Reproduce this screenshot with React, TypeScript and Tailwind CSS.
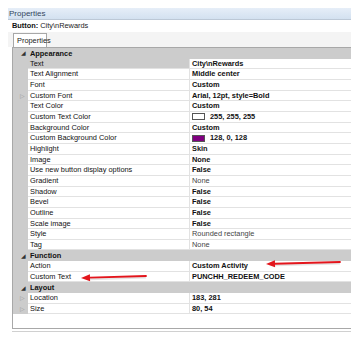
type Row = {
  label: string;
  value: string;
  bold?: boolean;
  expand?: boolean;
  selected?: boolean;
  swatch?: string;
};

type Section = { name: string; rows: Row[] };

const sections: Section[] = [
  {
    name: "Appearance",
    rows: [
      { label: "Text", value: "City\\nRewards", bold: true, selected: true },
      { label: "Text Alignment", value: "Middle center", bold: true },
      { label: "Font", value: "Custom", bold: true },
      { label: "Custom Font", value: "Arial, 12pt, style=Bold", bold: true, expand: true },
      { label: "Text Color", value: "Custom", bold: true },
      { label: "Custom Text Color", value: "255, 255, 255", bold: true, swatch: "#ffffff" },
      { label: "Background Color", value: "Custom", bold: true },
      { label: "Custom Background Color", value: "128, 0, 128", bold: true, swatch: "#800080" },
      { label: "Highlight", value: "Skin", bold: true },
      { label: "Image", value: "None", bold: true },
      { label: "Use new button display options", value: "False", bold: true },
      { label: "Gradient", value: "None" },
      { label: "Shadow", value: "False", bold: true },
      { label: "Bevel", value: "False", bold: true },
      { label: "Outline", value: "False", bold: true },
      { label: "Scale image", value: "False", bold: true },
      { label: "Style", value: "Rounded rectangle" },
      { label: "Tag", value: "None" },
    ],
  },
  {
    name: "Function",
    rows: [
      { label: "Action", value: "Custom Activity", bold: true },
      { label: "Custom Text", value: "PUNCHH_REDEEM_CODE", bold: true },
    ],
  },
  {
    name: "Layout",
    rows: [
      { label: "Location", value: "183, 281", bold: true, expand: true },
      { label: "Size", value: "80, 54", bold: true, expand: true },
    ],
  },
];

function Arrow({ x1, y1, x2, y2 }: { x1: number; y1: number; x2: number; y2: number }) {
  // tip at (x1, y1), tail at (x2, y2)
  const angle = Math.atan2(y2 - y1, x2 - x1);
  const len = 9;
  const half = 3.5;
  const bx = x1 + Math.cos(angle) * len;
  const by = y1 + Math.sin(angle) * len;
  const px = -Math.sin(angle) * half;
  const py = Math.cos(angle) * half;
  return (
    <g>
      <line x1={bx} y1={by + 1.5} x2={x2} y2={y2 + 1.5} stroke="#000" strokeOpacity={0.1} strokeWidth={2} />
      <line x1={bx} y1={by} x2={x2} y2={y2} stroke="#e3151c" strokeWidth={1.8} strokeLinecap="round" />
      <polygon points={`${x1},${y1} ${bx + px},${by + py} ${bx - px},${by - py}`} fill="#e3151c" />
    </g>
  );
}

function CategoryRow({ name }: { name: string }) {
  return (
    <div className="flex h-[10.67px] items-center bg-[#cccccc]">
      <span className="w-[17px] pl-[8px] text-[6px] leading-none text-[#333]">◢</span>
      <span className="font-bold text-[#111]">{name}</span>
    </div>
  );
}

function PropRow({ row }: { row: Row }) {
  return (
    <div className="flex h-[10.67px]">
      <div className="flex w-[15px] shrink-0 items-center bg-[#cccccc] pl-[7px]">
        {row.expand && <span className="text-[6px] leading-none text-[#9a9a9a]">▷</span>}
      </div>
      <div
        className={`flex w-[162px] shrink-0 items-center border-b border-r border-[#e2e2e2] pl-[2px] ${
          row.selected ? "bg-[#cccccc]" : "bg-white"
        }`}
      >
        <span className="text-[#111]">{row.label}</span>
      </div>
      <div className="flex flex-1 items-center border-b border-[#e2e2e2] bg-white pl-[2px]">
        {row.swatch && (
          <span
            className="mr-[5px] h-[7px] w-[13px] border border-[#555]"
            style={{ backgroundColor: row.swatch }}
          />
        )}
        <span className={row.bold ? "font-bold text-[#111]" : "text-[#444]"}>{row.value}</span>
      </div>
    </div>
  );
}

export default function App() {
  return (
    <div
      className="relative h-[344px] w-[363px] overflow-hidden bg-white text-[7.4px] leading-none"
      style={{ fontFamily: '"Liberation Sans", Arial, sans-serif' }}
    >
      <div className="ml-[8px] w-[343px] pt-[8px]">
        <div className="flex h-[12px] items-center border-b border-[#bcc8d6] bg-gradient-to-b from-[#e6eef8] to-[#d3e1f0] pl-[1px] text-[8px] text-[#34475e]">
          Properties
        </div>
        <div className="flex h-[12px] items-center gap-[2px] pl-[4px]">
          <span className="font-bold text-[#111]">Button:</span>
          <span className="text-[#222]">City\nRewards</span>
        </div>
        <div className="flex h-[15px] items-end bg-[#f4f4f4] pl-[5px]">
          <div className="flex h-[14px] w-[34px] items-center border border-b-0 border-[#a8a8a8] bg-white pl-[3px] text-[#222]">
            Properties
          </div>
        </div>
        <div className="ml-[4px] flex h-[282px] flex-col border-l border-t border-b border-[#a8a8a8]">
          {sections.map((s) => (
            <div key={s.name}>
              <CategoryRow name={s.name} />
              {s.rows.map((r) => (
                <PropRow key={r.label} row={r} />
              ))}
            </div>
          ))}
        </div>
        <div className="ml-[4px] mt-[2px] h-[1px] bg-[#d0d0d0]" />
      </div>
      <svg className="pointer-events-none absolute left-0 top-0" width={363} height={344}>
        <Arrow x1={266} y1={264} x2={340} y2={262} />
        <Arrow x1={81} y1={278} x2={146} y2={276} />
      </svg>
    </div>
  );
}
